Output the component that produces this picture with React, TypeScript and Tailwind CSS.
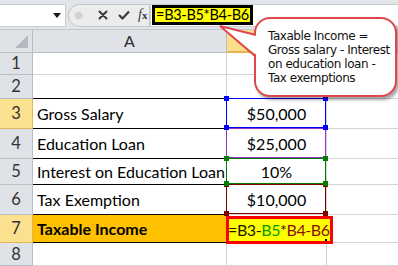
import React from "react";

const GRID = "border-[#d4d4d4]";
const cellFont = { fontFamily: "Lato, 'Liberation Sans', sans-serif" };

type RowDef = { n: number; h: string; sel?: boolean; a?: React.ReactNode; aCls?: string; aBottomBlack?: boolean; b?: React.ReactNode; bKey?: string };

function Corner({ color, pos }: { color: string; pos: string }) {
  return <div className={`absolute w-[5px] h-[5px] ${pos}`} style={{ backgroundColor: color }} />;
}

function RangeBox({ color, z, squares }: { color: string; z: string; squares: ("tl" | "tr" | "bl" | "br")[] }) {
  const pos: Record<string, string> = {
    tl: "-left-[3px] -top-[3px]",
    tr: "-right-[3px] -top-[3px]",
    bl: "-left-[3px] -bottom-[3px]",
    br: "-right-[3px] -bottom-[3px]",
  };
  return (
    <div className={`absolute left-[-1px] top-[-1px] right-0 bottom-0 border ${z}`} style={{ borderColor: color }}>
      {squares.map((s) => (
        <Corner key={s} color={color} pos={pos[s]} />
      ))}
    </div>
  );
}

export default function App() {
  const rows: RowDef[] = [
    { n: 1, h: "h-[22px]" },
    { n: 2, h: "h-[24px]", aBottomBlack: true },
    { n: 3, h: "h-[30px]", sel: true, a: "Gross Salary", aBottomBlack: true, b: "$50,000", bKey: "b3" },
    { n: 4, h: "h-[30px]", a: "Education Loan", aBottomBlack: true, b: "$25,000", bKey: "b4" },
    { n: 5, h: "h-[26px]", a: "Interest on Education Loan", aBottomBlack: true, b: "10%", bKey: "b5" },
    { n: 6, h: "h-[30px]", a: "Tax Exemption", aBottomBlack: true, b: "$10,000", bKey: "b6" },
    { n: 7, h: "h-[28px]", sel: true, a: "Taxable Income", aCls: "bg-[#ffc000] font-bold", aBottomBlack: true, bKey: "b7" },
    { n: 8, h: "h-[23px]" },
  ];

  return (
    <div className="relative w-[398px] h-[266px] overflow-hidden bg-white" style={cellFont}>
      {/* Formula bar */}
      <div className="h-[30px] bg-[#e1e4e8] border-b border-[#c3c7cc] flex items-center pt-[1px]">
        <div className="w-[66px] h-[23px] bg-white border border-[#c9ccd0] border-l-0 flex items-center justify-end pr-[4px]">
          <svg width="8" height="5" viewBox="0 0 8 5">
            <polygon points="0,0 8,0 4,5" fill="#1a1a1a" />
          </svg>
        </div>
        <div className="ml-[2px] w-[82px] h-[23px] rounded-l-[12px] border border-[#c3c6cb] bg-[#ececec] flex items-center">
          <div className="ml-[5px] w-[9px] h-[9px] rounded-full bg-[#cfcfcf] border border-[#e5e5e5]" />
          <svg className="ml-[15px]" width="10" height="10" viewBox="0 0 10 10">
            <path d="M1.5 1.5 L8.5 8.5 M8.5 1.5 L1.5 8.5" stroke="#3a3a3a" strokeWidth="2" strokeLinecap="round" />
          </svg>
          <svg className="ml-[10px]" width="12" height="10" viewBox="0 0 12 10">
            <path d="M1 5 L4.5 8.5 L11 1.5" stroke="#3a3a3a" strokeWidth="2.2" fill="none" strokeLinejoin="round" />
          </svg>
          <span
            className="ml-[8px] text-[14px] italic leading-none text-[#3a3a3a]"
            style={{ fontFamily: "'Liberation Serif', serif" }}
          >
            f<span className="text-[11px] not-italic font-bold">x</span>
          </span>
        </div>
        <div className="flex-1 h-[23px] bg-white border border-[#c9ccd0] border-r-0 flex items-center pl-[1px]">
          <div className="h-[20px] w-[101px] border-[3px] border-black bg-[#ffff00] flex items-center justify-center text-[14.5px] leading-none text-black whitespace-nowrap tracking-[-0.3px]">
            =B3-B5*B4-B6
          </div>
        </div>
      </div>

      {/* Column headers */}
      <div className="flex h-[23px]">
        <div className="relative w-[33px] bg-[#dfe3e8] border-r border-b border-[#b9bec5]">
          <svg className="absolute right-[4px] bottom-[4px]" width="13" height="13" viewBox="0 0 13 13">
            <polygon points="13,0 13,13 0,13" fill="#b5b9bf" />
          </svg>
        </div>
        <div className="w-[194px] bg-[#dfe3e8] border-r border-b border-[#b9bec5] flex items-center justify-center text-[16px] text-[#2a2a2a]">
          A
        </div>
        <div className="w-[100px] bg-[#fbdf8b] border-r border-b-2 border-[#e8b34c] flex items-center justify-center text-[16px] text-[#2a2a2a]">
          B
        </div>
        <div className="flex-1 bg-[#dfe3e8] border-b border-[#b9bec5] flex items-center justify-center text-[16px] text-[#2a2a2a]">
          C
        </div>
      </div>

      {/* Rows */}
      {rows.map((r) => (
        <div key={r.n} className={`flex ${r.h}`}>
          <div
            className={`w-[33px] border-r border-b flex items-center justify-center text-[16.5px] text-[#333] ${
              r.sel ? "bg-[#fbe08f] border-[#e3b757]" : "bg-[#dfe3e8] border-[#b9bec5]"
            }`}
          >
            {r.n}
          </div>
          <div
            className={`w-[194px] border-r border-b ${GRID} flex items-center pl-[4px] text-[16px] text-black whitespace-nowrap overflow-hidden ${
              r.aCls ?? ""
            }`}
            style={{ borderRightColor: "#d4d4d4", borderBottomColor: r.aBottomBlack ? "#000" : "#d4d4d4" }}
          >
            {r.a}
          </div>
          <div className={`relative w-[100px] border-r border-b ${GRID} flex items-center justify-center text-[16px] text-black`}>
            {r.b}
            {r.bKey === "b3" && <RangeBox color="#0000ff" z="z-20" squares={["tl", "tr", "bl", "br"]} />}
            {r.bKey === "b4" && <RangeBox color="#9933cc" z="z-10" squares={[]} />}
            {r.bKey === "b5" && <RangeBox color="#008000" z="z-20" squares={["tl", "tr", "bl", "br"]} />}
            {r.bKey === "b6" && <RangeBox color="#800000" z="z-10" squares={["tl", "tr", "bl", "br"]} />}
            {r.bKey === "b7" && (
              <div className="absolute left-[-1px] top-[1px] w-[107px] h-[28px] border-[3px] border-[#ff0000] bg-[#ffff00] z-30 flex items-center text-[16px] leading-none whitespace-nowrap tracking-[-0.4px]">
                <span className="ml-[-1px] text-[#1a1a00]">=B3-</span>
                <span className="text-[#00a000]">B5</span>
                <span className="text-[#1a1a00]">*</span>
                <span className="text-[#8b1010]">B4-B6</span>
                <div className="absolute right-[3px] bottom-[0px] w-[2px] h-[2px] bg-black" />
              </div>
            )}
          </div>
          <div className={`flex-1 border-b ${GRID}`} />
        </div>
      ))}

      {/* Callout */}
      <div
        className="absolute left-[254px] top-[17px] w-[143px] h-[80px] rounded-[16px] border-2 border-[#e0474c] bg-white shadow-[2px_3px_3px_rgba(0,0,0,0.35)] z-40 pl-[12px] pt-[10px] text-[12px] leading-[14px] text-[#111]"
        style={{ fontFamily: "'DejaVu Sans', Tahoma, sans-serif", letterSpacing: "-0.45px" }}
      >
        <div>Taxable Income =</div>
        <div>Gross salary - Interest</div>
        <div>on education loan -</div>
        <div>Tax exemptions</div>
      </div>
      <svg className="absolute left-[214px] top-[20px] z-50" width="50" height="42" viewBox="214 20 50 42">
        <polygon points="220,26 258,35 258,56" fill="white" />
        <polyline points="256,35 220,26 255,56" fill="none" stroke="#e0474c" strokeWidth="2" strokeLinejoin="miter" />
      </svg>
    </div>
  );
}
